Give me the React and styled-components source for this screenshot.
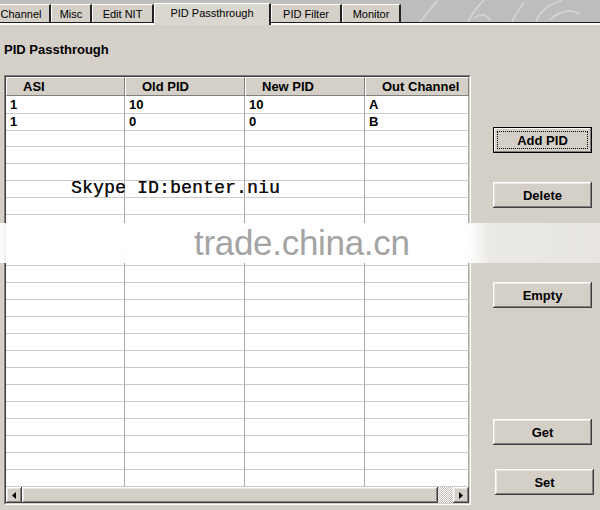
import React from 'react'
import styled, { createGlobalStyle, css } from 'styled-components'

const GlobalStyle = createGlobalStyle`
  html, body {
    margin: 0;
    padding: 0;
    background: #d4d0c8;
  }
  body {
    font-family: "Liberation Sans", Arial, sans-serif;
    color: #000;
  }
`

const Page = styled.div`
  position: relative;
  width: 600px;
  height: 510px;
  overflow: hidden;
  background: #d4d0c8;
`

const TabStrip = styled.div`
  position: relative;
  display: flex;
  align-items: flex-end;
  height: 22px;
  background: #bdbdbd;
  border-bottom: 1px solid #1c1c1c;
`

const Tab = styled.div`
  box-sizing: border-box;
  width: ${p => p.$w}px;
  margin-left: ${p => p.$ml || 0}px;
  height: 18px;
  display: flex;
  align-items: center;
  justify-content: center;
  font-size: 11px;
  background: #d4d0c8;
  border-top: 1px solid #fff;
  border-left: 1px solid #fff;
  border-right: 2px solid #222;
  white-space: nowrap;
  ${p => p.$active && css`
    position: relative;
    z-index: 2;
    height: 22px;
    margin-bottom: -3px;
    padding-bottom: 3px;
    background: #dad7d0;
  `}
`

const TabDecor = styled.svg`
  position: absolute;
  left: 400px;
  top: 0;
  pointer-events: none;
`

const TabPage = styled.div`
  display: flex;
  border-top: 2px solid #fff;
  padding-left: 4px;
`

const LeftCol = styled.div`
  width: 467px;
`

const Title = styled.div`
  height: 16px;
  line-height: 16px;
  margin: 17px 0;
  font-size: 13px;
  font-weight: bold;
`

const GridBox = styled.div`
  box-sizing: border-box;
  width: 467px;
  height: 430px;
  border-top: 1px solid #808080;
  border-left: 1px solid #808080;
  border-right: 1px solid #fff;
  border-bottom: 1px solid #fff;
  display: flex;
`

const GridInner = styled.div`
  flex: 1;
  display: flex;
  flex-direction: column;
  border-top: 1px solid #404040;
  border-left: 1px solid #404040;
  border-right: 1px solid #d4d0c8;
  border-bottom: 1px solid #d4d0c8;
  background: #fff;
`

const cols = css`
  display: grid;
  grid-template-columns: 119px 120px 120px 1fr;
`

const HeaderRow = styled.div`
  ${cols};
  height: 19px;
  background: #d4d0c8;
`

const HeadCell = styled.div`
  box-sizing: border-box;
  padding-left: 16px;
  font-size: 13px;
  font-weight: bold;
  line-height: 17px;
  border-top: 1px solid #fff;
  border-left: 1px solid #fff;
  border-right: 1px solid #808080;
  border-bottom: 1px solid #808080;
`

const Rows = styled.div`
  flex: 1;
  overflow: hidden;
`

const Row = styled.div`
  ${cols};
  height: 17px;
`

const Cell = styled.div`
  box-sizing: border-box;
  padding: 1px 0 0 4px;
  font-size: 13px;
  font-weight: bold;
  line-height: 16px;
  border-right: 1px solid #a8a8a8;
  border-bottom: 1px solid #cacaca;
`

const ScrollBar = styled.div`
  display: flex;
  height: 16px;
  background: #d4d0c8;
`

const raised = css`
  box-sizing: border-box;
  background: #d4d0c8;
  box-shadow: inset -1px -1px #404040, inset 1px 1px #fff, inset -2px -2px #808080, inset 2px 2px #e8e6e2;
`

const ScrollButton = styled.div`
  ${raised};
  width: 16px;
  display: flex;
  align-items: center;
  justify-content: center;
`

const Thumb = styled.div`
  ${raised};
  flex: 1;
`

const Track = styled.div`
  width: 15px;
  background: repeating-conic-gradient(#fff 0 25%, #c4c0b8 0 50%) 0 0 / 2px 2px;
`

const ButtonCol = styled.div`
  display: flex;
  flex-direction: column;
  margin-left: 22px;
`

const Button = styled.div`
  ${raised};
  width: 99px;
  height: 26px;
  margin-top: ${p => p.$top}px;
  margin-left: ${p => p.$shift || 0}px;
  display: flex;
  align-items: center;
  justify-content: center;
  font-size: 13px;
  font-weight: bold;
  ${p => p.$focus && css`
    border: 1px solid #000;
    box-shadow: inset -1px -1px #808080, inset 1px 1px #fff;
    outline: 1px dotted #000;
    outline-offset: -5px;
  `}
`

const Band = styled.div`
  position: absolute;
  top: 223px;
  height: 40px;
  left: 0;
  width: 600px;
  background: linear-gradient(to right,
    rgba(255,255,255,0.9) 0,
    rgba(255,255,255,0.97) 20px,
    rgba(255,255,255,0.97) 470px,
    rgba(255,255,255,0.55) 490px,
    rgba(255,255,255,0.45) 600px);
  pointer-events: none;
`

const SkypeMark = styled.div`
  position: absolute;
  left: 71px;
  top: 178px;
  font-family: "Liberation Mono", "Courier New", monospace;
  font-size: 18px;
  line-height: 20px;
  letter-spacing: 0.2px;
  color: #111;
  text-shadow: 0.3px 0 0 #111;
`

const TradeMark = styled.div`
  position: absolute;
  left: 194px;
  top: 223px;
  font-family: "Liberation Sans", Arial, sans-serif;
  font-size: 35px;
  line-height: 40px;
  letter-spacing: -0.3px;
  color: #a4a4a4;
`

const tabs = [
  { label: 'Channel', w: 59, ml: -8 },
  { label: 'Misc', w: 41 },
  { label: 'Edit NIT', w: 62 },
  { label: 'PID Passthrough', w: 117, active: true },
  { label: 'PID Filter', w: 71 },
  { label: 'Monitor', w: 59 },
]

const data = [
  ['1', '10', '10', 'A'],
  ['1', '0', '0', 'B'],
]

const Arrow = ({ left }) => (
  <svg width="4" height="7" viewBox="0 0 4 7">
    <polygon points={left ? '4,0 0,3.5 4,7' : '0,0 4,3.5 0,7'} fill="#000" />
  </svg>
)

export default function App() {
  const rows = []
  for (let i = 0; i < 23; i++) {
    rows.push(data[i] || ['', '', '', ''])
  }

  return (
    <>
      <GlobalStyle />
      <Page>
        <TabStrip>
          {tabs.map(t => (
            <Tab key={t.label} $w={t.w} $ml={t.ml} $active={t.active}>{t.label}</Tab>
          ))}
          <TabDecor width="200" height="22" viewBox="0 0 200 22">
            <g fill="none" stroke="#d8d8d8" strokeWidth="2" opacity="0.8">
              <path d="M20 22 L38 0" />
              <path d="M68 22 C72 12 78 6 84 0" />
              <path d="M74 18 C80 14 86 14 90 20" />
              <path d="M112 22 C116 14 120 8 124 2" />
              <path d="M136 22 C140 10 150 4 162 0" />
              <path d="M150 20 C158 12 170 8 180 14" />
            </g>
          </TabDecor>
        </TabStrip>

        <TabPage>
          <LeftCol>
            <Title>PID Passthrough</Title>
            <GridBox>
              <GridInner>
                <HeaderRow>
                  <HeadCell>ASI</HeadCell>
                  <HeadCell>Old PID</HeadCell>
                  <HeadCell>New PID</HeadCell>
                  <HeadCell>Out Channel</HeadCell>
                </HeaderRow>
                <Rows>
                  {rows.map((r, i) => (
                    <Row key={i}>
                      {r.map((c, j) => <Cell key={j}>{c}</Cell>)}
                    </Row>
                  ))}
                </Rows>
                <ScrollBar>
                  <ScrollButton><Arrow left /></ScrollButton>
                  <Thumb />
                  <Track />
                  <ScrollButton><Arrow /></ScrollButton>
                </ScrollBar>
              </GridInner>
            </GridBox>
          </LeftCol>

          <ButtonCol>
            <Button $top={102} $focus>Add PID</Button>
            <Button $top={29}>Delete</Button>
            <Button $top={74}>Empty</Button>
            <Button $top={111}>Get</Button>
            <Button $top={24} $shift={2}>Set</Button>
          </ButtonCol>
        </TabPage>

        <SkypeMark>Skype ID:benter.niu</SkypeMark>
        <Band />
        <TradeMark>trade.china.cn</TradeMark>
      </Page>
    </>
  )
}
